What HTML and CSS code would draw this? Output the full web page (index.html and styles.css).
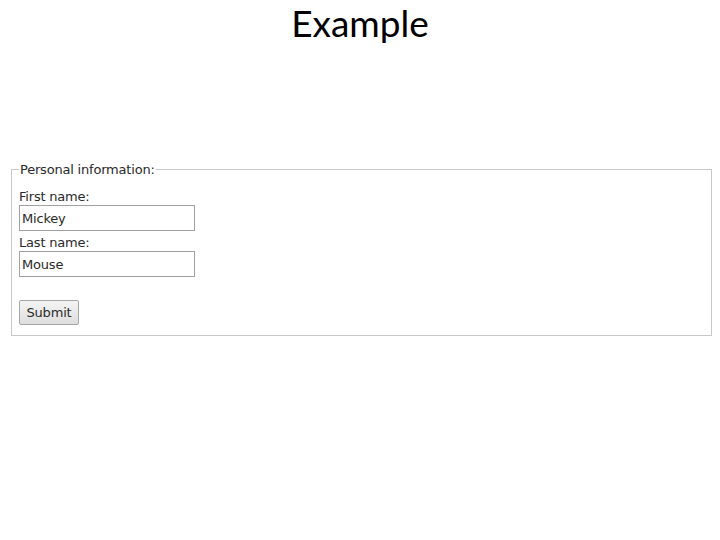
FILE: index.html
```html
<!DOCTYPE html>
<html lang="en">
<head>
    <meta charset="UTF-8">
    <title>Example</title>
    <link rel="stylesheet" href="styles.css">
</head>
<body>
    <h1 class="slide-title">Example</h1>

    <form class="demo-form">
        <fieldset class="info-box">
            <legend>Personal information:</legend>
            <label class="field-label first" for="first">First name:</label>
            <input class="text-input" id="first" type="text" value="Mickey">
            <label class="field-label" for="last">Last name:</label>
            <input class="text-input" id="last" type="text" value="Mouse">
            <div class="actions">
                <button class="submit-btn" type="button">Submit</button>
            </div>
        </fieldset>
    </form>
</body>
</html>
```

FILE: styles.css
```css
/* base */
body {
    margin: 0;
    background: #fff;
    color: #000;
}

/* title at the top of the slide */
.slide-title {
    margin: 0;
    padding-top: 0;
    text-align: center;
    font-family: Lato, "Open Sans", sans-serif;
    font-weight: 400;
    font-size: 37px;
    line-height: normal;
}

/* form */
.demo-form {
    padding: 117px 8px 0 11px;
}

.info-box {
    margin: 0;
    padding: 0 7px 10px 7px;
    border: 1px solid #c8c8c8;
    font-family: "DejaVu Sans", Verdana, sans-serif;
    font-size: 13px;
    letter-spacing: -0.2px;
    color: #2a2a2a;
    display: flex;
    flex-direction: column;
    align-items: flex-start;
}

.info-box legend {
    padding: 0 1px;
    margin-left: 0;
    line-height: 15px;
}

.field-label {
    margin-top: 4px;
    line-height: 15px;
}

.field-label.first {
    margin-top: 12px;
}

.text-input {
    box-sizing: border-box;
    width: 176px;
    height: 26px;
    margin-top: 1px;
    padding: 2px 2px;
    border: 1px solid #a0a0a0;
    font-family: "DejaVu Sans", Verdana, sans-serif;
    font-size: 13px;
    letter-spacing: -0.2px;
    color: #2a2a2a;
}

.actions {
    margin-top: 23px;
}

.submit-btn {
    box-sizing: border-box;
    width: 60px;
    height: 25px;
    padding: 0;
    border: 1px solid #a6a6a6;
    border-radius: 2px;
    background: linear-gradient(#f4f4f4, #dedede);
    font-family: "DejaVu Sans", Verdana, sans-serif;
    font-size: 13px;
    letter-spacing: -0.2px;
    color: #2a2a2a;
}
```
